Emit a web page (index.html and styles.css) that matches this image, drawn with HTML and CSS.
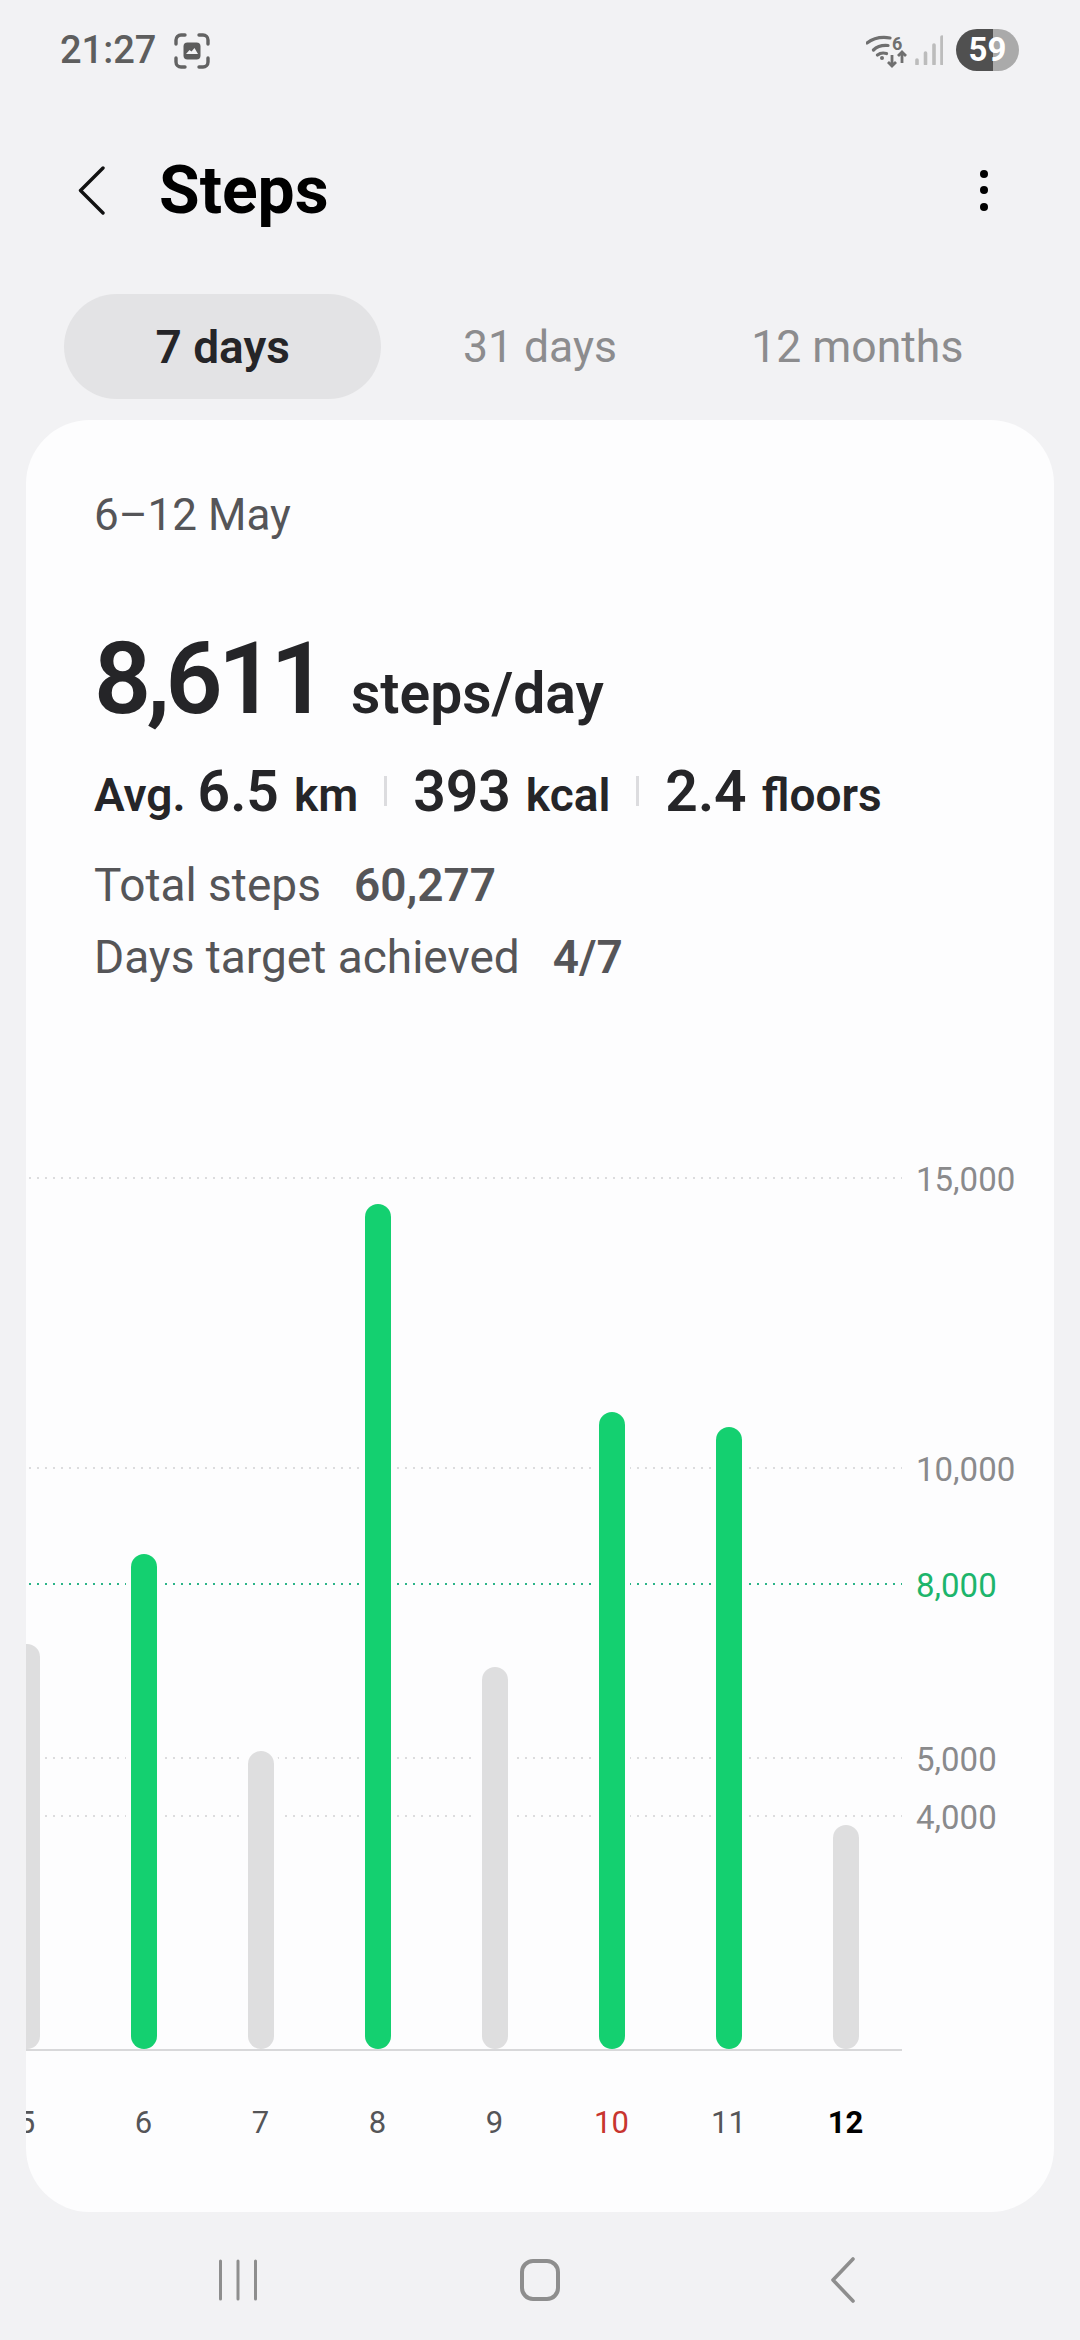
FILE: index.html
```html
<!DOCTYPE html>
<html lang="en">
<head>
    <meta charset="UTF-8">
    <meta name="viewport" content="width=device-width, initial-scale=1.0">
    <title>Steps</title>
    <link rel="stylesheet" href="styles.css">
</head>
<body>
    <div class="status-bar">
        <div class="status-left">
            <span class="time">21:27</span>
            <svg class="scan-icon" width="36" height="36" viewBox="0 0 36 36">
                <path d="M2 11V7a5 5 0 0 1 5-5h4M25 2h4a5 5 0 0 1 5 5v4M34 25v4a5 5 0 0 1-5 5h-4M11 34H7a5 5 0 0 1-5-5v-4" fill="none" stroke="#636363" stroke-width="3.4" stroke-linecap="round"/>
                <rect x="9.500" y="9.500" width="17" height="17" rx="4" fill="#5c5c5c"/>
                <path d="M12 21l3.500-4 2 1.500 3-3.500 3.500 6z" fill="#f2f2f4"/>
            </svg>
        </div>
        <div class="status-right">
            <svg class="wifi-icon" width="44" height="40" viewBox="0 0 44 40">
                <path d="M1 13C7 8.500 15 6.500 24 8M7.500 20C11 16.500 16 15 22 15.500M11.500 25C14 23 17 22.500 20.500 23.500" fill="none" stroke="#6f6f6f" stroke-width="3.200" stroke-linecap="round"/>
                <circle cx="16" cy="28" r="2" fill="#6f6f6f"/>
                <text class="wifi-six" x="26" y="19.500">6</text>
                <path d="M26 25v11M22 32l4 4 4-4M36 33V22M32 26l4-4 4 4" fill="none" stroke="#6f6f6f" stroke-width="2.800"/>
            </svg>
            <svg class="signal-icon" width="28" height="30" viewBox="0 0 28 30">
                <path d="M2 29v-4M10.500 29V18M19 29V10M27 29V2" fill="none" stroke="#bcbcbc" stroke-width="3.600" stroke-linecap="round"/>
            </svg>
            <div class="battery">59</div>
        </div>
    </div>

    <div class="app-bar">
        <svg class="back-icon" width="27" height="49" viewBox="0 0 27 49">
            <path d="M25 2L2.500 24.500 25 47" fill="none" stroke="#111" stroke-width="3.400" stroke-linecap="round" stroke-linejoin="round"/>
        </svg>
        <h1>Steps</h1>
        <div class="more">
            <span></span><span></span><span></span>
        </div>
    </div>

    <div class="tabs">
        <div class="tab active">7 days</div>
        <div class="tab">31 days</div>
        <div class="tab">12 months</div>
    </div>

    <div class="card">
        <div class="summary">
            <div class="range">6–12 May</div>
            <div class="average"><span class="big">8,611</span><span class="unit">steps/day</span></div>
            <div class="stats">
                <span class="stat-label">Avg.</span><b>6.5</b><span class="stat-label">km</span>
                <i class="sep"></i>
                <b>393</b><span class="stat-label">kcal</span>
                <i class="sep"></i>
                <b>2.4</b><span class="stat-label">floors</span>
            </div>
            <div class="line">Total steps<b>60,277</b></div>
            <div class="line">Days target achieved<b>4/7</b></div>
        </div>

        <div class="plot">
            <div class="grid-line" style="--steps: 15000"><span>15,000</span></div>
            <div class="grid-line" style="--steps: 10000"><span>10,000</span></div>
            <div class="grid-line target" style="--steps: 8000"><span>8,000</span></div>
            <div class="grid-line" style="--steps: 5000"><span>5,000</span></div>
            <div class="grid-line" style="--steps: 4000"><span>4,000</span></div>
            <div class="bars">
                <div class="bar-slot"><div class="bar" style="height: 405px"></div></div>
                <div class="bar-slot"><div class="bar hit" style="height: 495px"></div></div>
                <div class="bar-slot"><div class="bar" style="height: 298px"></div></div>
                <div class="bar-slot"><div class="bar hit" style="height: 845px"></div></div>
                <div class="bar-slot"><div class="bar" style="height: 382px"></div></div>
                <div class="bar-slot"><div class="bar hit" style="height: 637px"></div></div>
                <div class="bar-slot"><div class="bar hit" style="height: 622px"></div></div>
                <div class="bar-slot"><div class="bar" style="height: 224px"></div></div>
            </div>
            <div class="axis"></div>
        </div>

        <div class="days">
            <span>5</span>
            <span>6</span>
            <span>7</span>
            <span>8</span>
            <span>9</span>
            <span class="sunday">10</span>
            <span>11</span>
            <span class="today">12</span>
        </div>
    </div>

    <div class="nav-bar">
        <svg width="40" height="44" viewBox="0 0 40 44">
            <path d="M2.500 3v38M20 3v38M37.500 3v38" fill="none" stroke="#8e8e8e" stroke-width="3" stroke-linecap="round"/>
        </svg>
        <svg width="42" height="44" viewBox="0 0 42 44">
            <rect x="3" y="3" width="36" height="38" rx="11" fill="none" stroke="#8e8e8e" stroke-width="4"/>
        </svg>
        <svg width="26" height="46" viewBox="0 0 26 46">
            <path d="M23 2L3 23l20 21" fill="none" stroke="#8e8e8e" stroke-width="3.600" stroke-linecap="round" stroke-linejoin="round"/>
        </svg>
    </div>
</body>
</html>
```

FILE: styles.css
```css
* {
    margin: 0;
    padding: 0;
    box-sizing: border-box;
}

body {
    width: 1080px;
    height: 2340px;
    overflow: hidden;
    background: #f2f2f4;
    font-family: 'Roboto', sans-serif;
    color: #252528;
}

/* status bar */
.status-bar {
    height: 100px;
    padding: 0 61px 0 60px;
    display: flex;
    justify-content: space-between;
    align-items: center;
}

.status-left,
.status-right {
    display: flex;
    align-items: center;
}

.time {
    font-size: 38px;
    font-weight: 500;
    color: #5e5e5e;
}

.scan-icon {
    margin-left: 18px;
    margin-top: 2px;
}

.wifi-six {
    font-family: 'Roboto', sans-serif;
    font-size: 18px;
    font-weight: 700;
    fill: #6f6f6f;
}

.signal-icon {
    margin-left: 5px;
}

.battery {
    width: 63px;
    height: 42px;
    margin-left: 13px;
    border-radius: 21px;
    background: linear-gradient(90deg, #505050 0, #505050 37px, #aaaaaa 37px);
    color: #fff;
    font-size: 33px;
    font-weight: 700;
    line-height: 42px;
    text-align: center;
}

/* title row */
.app-bar {
    height: 180px;
    padding: 0 0 0 78px;
    display: flex;
    align-items: center;
    position: relative;
}

.app-bar h1 {
    margin-left: 54px;
    font-size: 66px;
    font-weight: 700;
    color: #000;
}

.more {
    margin-left: auto;
    margin-right: 92px;
    display: flex;
    flex-direction: column;
    gap: 8.500px;
}

.more span {
    width: 8px;
    height: 8px;
    border-radius: 50%;
    background: #000;
}

/* period tabs */
.tabs {
    height: 105px;
    margin-top: 14px;
    padding: 0 64px;
    display: grid;
    grid-template-columns: repeat(3, 1fr);
}

.tab {
    display: flex;
    align-items: center;
    justify-content: center;
    border-radius: 53px;
    font-size: 44.500px;
    color: #8c8c8e;
}

.tab.active {
    background: #e3e3e5;
    color: #252528;
    font-size: 46px;
    font-weight: 600;
}

/* card */
.card {
    height: 1792px;
    margin: 21px 26px 0;
    background: #fdfdfe;
    border-radius: 64px;
    overflow: hidden;
}

.summary {
    height: 730px;
    padding: 65px 0 0 68px;
}

.range {
    font-size: 44px;
    line-height: 60px;
    color: #555558;
}

.average {
    margin-top: 75px;
    display: flex;
    align-items: baseline;
}

.big {
    font-size: 100px;
    font-weight: 600;
    line-height: 118px;
    letter-spacing: -4.600px;
}

.unit {
    margin-left: 28px;
    font-size: 57px;
    font-weight: 600;
}

.stats {
    margin-top: 20px;
    height: 66px;
    display: flex;
    align-items: baseline;
}

.stats b {
    font-size: 57px;
    font-weight: 600;
    margin-right: 15px;
}

.stat-label {
    font-size: 46px;
    font-weight: 600;
}

.stats .stat-label:first-child {
    margin-right: 12px;
}

.sep {
    width: 3px;
    height: 30px;
    margin: 0 26px;
    background: #dcdcdf;
    align-self: center;
}

.line {
    margin-top: 6px;
    font-size: 46px;
    line-height: 66px;
    color: #555558;
}

.stats + .line {
    margin-top: 28px;
}

.line b {
    margin-left: 33px;
    font-weight: 600;
}

/* chart */
.plot {
    height: 899px;
    position: relative;
}

.grid-line {
    position: absolute;
    left: 0;
    width: 876px;
    height: 2px;
    bottom: calc(var(--steps) * 0.058px);
    background: radial-gradient(circle, #dcdcde 1px, transparent 1.200px) 0 0 / 8px 2px repeat-x;
}

.grid-line.target {
    background-image: radial-gradient(circle, #2bb488 1.100px, transparent 1.300px);
}

.grid-line span {
    position: absolute;
    left: 890px;
    top: -16px;
    font-size: 33px;
    line-height: 38px;
    color: #8a8a8c;
}

.grid-line.target span {
    color: #1db56c;
}

.bars {
    position: absolute;
    left: -58px;
    bottom: 0;
    display: flex;
    align-items: flex-end;
}

.bar-slot {
    width: 117px;
    display: flex;
    justify-content: center;
}

.bar {
    width: 26px;
    border-radius: 13px;
    background: #dededf;
    box-shadow: 0 0 0 5px #fdfdfe;
}

.bar.hit {
    background: #14d070;
}

.axis {
    position: absolute;
    left: 0;
    bottom: -2px;
    width: 876px;
    height: 2px;
    background: #d8d8da;
}

.days {
    margin-left: -58px;
    margin-top: 56px;
    display: flex;
}

.days span {
    width: 117px;
    text-align: center;
    font-size: 31px;
    line-height: 36px;
    color: #555558;
}

.days .sunday {
    color: #c8352f;
}

.days .today {
    color: #000;
    font-weight: 700;
}

/* nav bar */
.nav-bar {
    height: 136px;
    padding: 0 86px 0 87px;
    display: grid;
    grid-template-columns: repeat(3, 1fr);
    justify-items: center;
    align-items: center;
}
```
